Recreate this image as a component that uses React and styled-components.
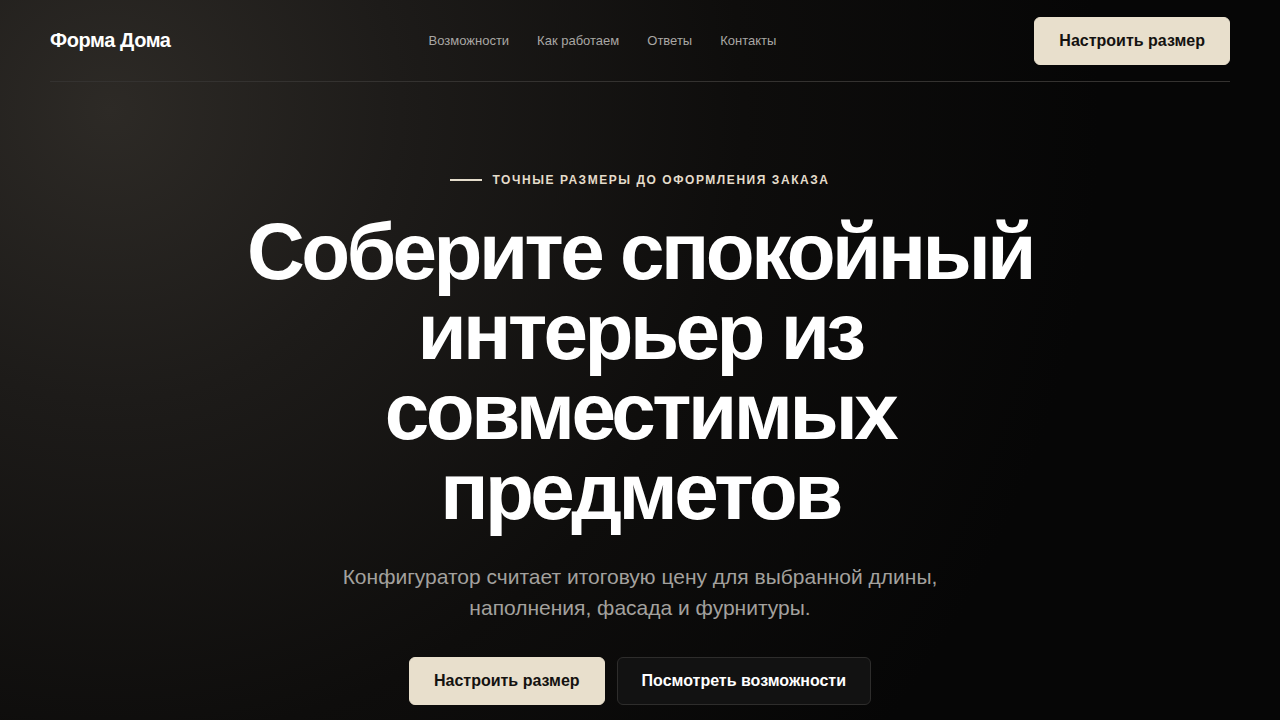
import React from "react"
import styled, { createGlobalStyle } from "styled-components"

const GlobalStyle = createGlobalStyle`
  html, body {
    margin: 0;
    padding: 0;
    background: #060606;
  }
  body {
    font-family: "Liberation Sans", Arial, sans-serif;
    color: #fff;
  }
  * {
    box-sizing: border-box;
  }
`

const Page = styled.div`
  min-height: 720px;
  background:
    radial-gradient(circle at 110px 110px, #2d2a26 0%, #1d1b19 22%, #0e0d0c 48%, #060606 75%);
  overflow: hidden;
`

const Header = styled.header`
  margin: 0 50px;
  height: 82px;
  display: flex;
  align-items: center;
  justify-content: space-between;
  border-bottom: 1px solid #343230;
`

const Logo = styled.a`
  font-size: 20px;
  font-weight: 700;
  letter-spacing: -0.4px;
  color: #fff;
  text-decoration: none;
`

const Nav = styled.nav`
  display: flex;
  gap: 28px;
`

const NavLink = styled.a`
  font-size: 13px;
  color: #a9a7a4;
  text-decoration: none;
`

const Button = styled.a`
  display: inline-flex;
  align-items: center;
  justify-content: center;
  height: 48px;
  padding: 0 24px;
  border-radius: 6px;
  font-size: 16px;
  font-weight: 700;
  text-decoration: none;
  background: ${(p) => (p.$ghost ? "#121212" : "#e8dfcc")};
  color: ${(p) => (p.$ghost ? "#fff" : "#141210")};
  border: 1px solid ${(p) => (p.$ghost ? "#2e2d2c" : "#e8dfcc")};
`

const Hero = styled.main`
  display: flex;
  flex-direction: column;
  align-items: center;
  text-align: center;
  padding-top: 91px;
`

const Eyebrow = styled.div`
  display: flex;
  align-items: center;
  gap: 10px;
  font-size: 12px;
  font-weight: 700;
  letter-spacing: 1.55px;
  color: #e4dccb;
  &::before {
    content: "";
    width: 32px;
    height: 2px;
    background: #e4dccb;
  }
`

const Title = styled.h1`
  margin: 25px 0 0;
  max-width: 860px;
  font-size: 80px;
  line-height: 80px;
  font-weight: 700;
  letter-spacing: -3.5px;
  color: #fff;
`

const Lead = styled.p`
  margin: 29px 0 0;
  max-width: 620px;
  font-size: 21px;
  line-height: 31px;
  color: #a3a19e;
`

const Actions = styled.div`
  display: flex;
  gap: 12px;
  margin-top: 34px;
`

export default function App() {
  return (
    <Page>
      <GlobalStyle />
      <Header>
        <Logo href="#">Форма Дома</Logo>
        <Nav>
          <NavLink href="#">Возможности</NavLink>
          <NavLink href="#">Как работаем</NavLink>
          <NavLink href="#">Ответы</NavLink>
          <NavLink href="#">Контакты</NavLink>
        </Nav>
        <Button href="#">Настроить размер</Button>
      </Header>
      <Hero>
        <Eyebrow>ТОЧНЫЕ РАЗМЕРЫ ДО ОФОРМЛЕНИЯ ЗАКАЗА</Eyebrow>
        <Title>Соберите спокойный интерьер из совместимых предметов</Title>
        <Lead>Конфигуратор считает итоговую цену для выбранной длины, наполнения, фасада и фурнитуры.</Lead>
        <Actions>
          <Button href="#">Настроить размер</Button>
          <Button href="#" $ghost>
            Посмотреть возможности
          </Button>
        </Actions>
      </Hero>
    </Page>
  )
}
